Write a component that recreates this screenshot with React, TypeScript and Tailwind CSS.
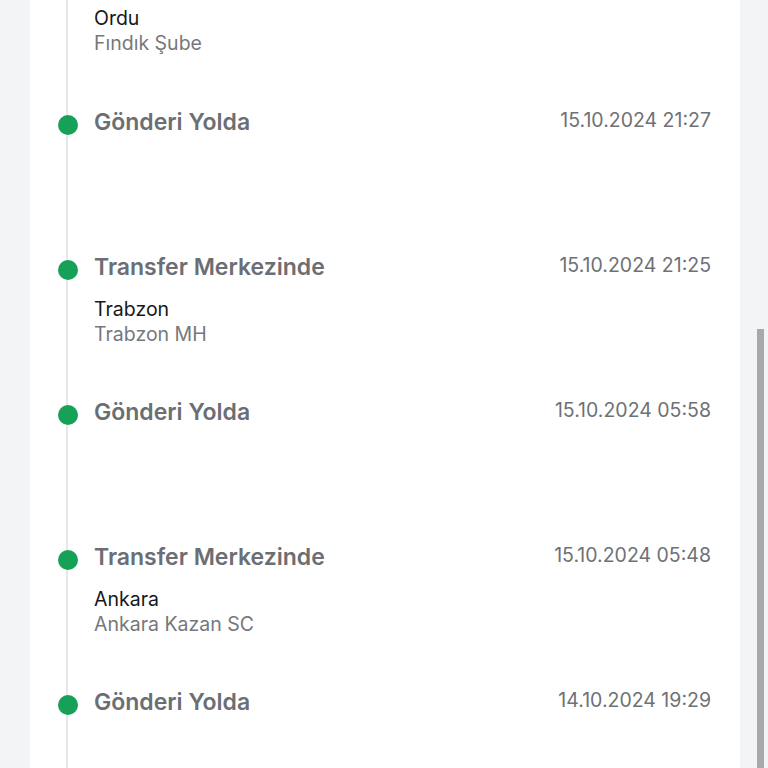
import React from "react";

interface TrackingEvent {
  title?: string;
  date?: string;
  city?: string;
  branch?: string;
}

// first entry is scrolled past: only its location lines are still visible
const events: TrackingEvent[] = [
  { city: "Ordu", branch: "Fındık Şube" },
  { title: "Gönderi Yolda", date: "15.10.2024 21:27" },
  { title: "Transfer Merkezinde", date: "15.10.2024 21:25", city: "Trabzon", branch: "Trabzon MH" },
  { title: "Gönderi Yolda", date: "15.10.2024 05:58" },
  { title: "Transfer Merkezinde", date: "15.10.2024 05:48", city: "Ankara", branch: "Ankara Kazan SC" },
  { title: "Gönderi Yolda", date: "14.10.2024 19:29" },
];

const TimelineItem: React.FC<{ item: TrackingEvent }> = ({ item }) => {
  if (!item.title) {
    return (
      <li className="h-[108px] pl-[26px] pt-[6px] text-[19.5px] leading-[25px]">
        <p className="text-[#16181b]">{item.city}</p>
        <p className="text-[#75787d]">{item.branch}</p>
      </li>
    );
  }
  return (
    <li className="relative h-[145px] pl-[26px] pr-[29px]">
      <span className="absolute left-[-10px] top-[7px] h-5 w-5 rounded-full bg-[#17a057]" />
      <div className="flex items-start justify-between">
        <h3 className="text-[23px] leading-[28px] font-semibold text-[#6b6e73]">
          {item.title}
        </h3>
        <span className="text-[19.5px] leading-[24px] text-[#6e7175]">{item.date}</span>
      </div>
      {item.city && (
        <div className="mt-[16px] text-[19.5px] leading-[25px]">
          <p className="text-[#16181b]">{item.city}</p>
          <p className="text-[#75787d]">{item.branch}</p>
        </div>
      )}
    </li>
  );
};

export default function App() {
  return (
    <div
      className="flex h-[768px] w-full overflow-hidden bg-[#f3f4f6]"
      style={{ fontFamily: "Inter, 'Noto Sans', sans-serif" }}
    >
      <div className="w-[30px] shrink-0" />
      <main className="flex-1 bg-white">
        <ul className="ml-[36px] h-full border-l-2 border-[#e6e7e9]">
          {events.map((item, i) => (
            <TimelineItem key={i} item={item} />
          ))}
        </ul>
      </main>
      <div className="flex w-[28px] shrink-0 flex-col pt-[329px] pl-[17px] pr-[4px]">
        <div className="flex-1 bg-[#a9a9ab]" />
      </div>
    </div>
  );
}
